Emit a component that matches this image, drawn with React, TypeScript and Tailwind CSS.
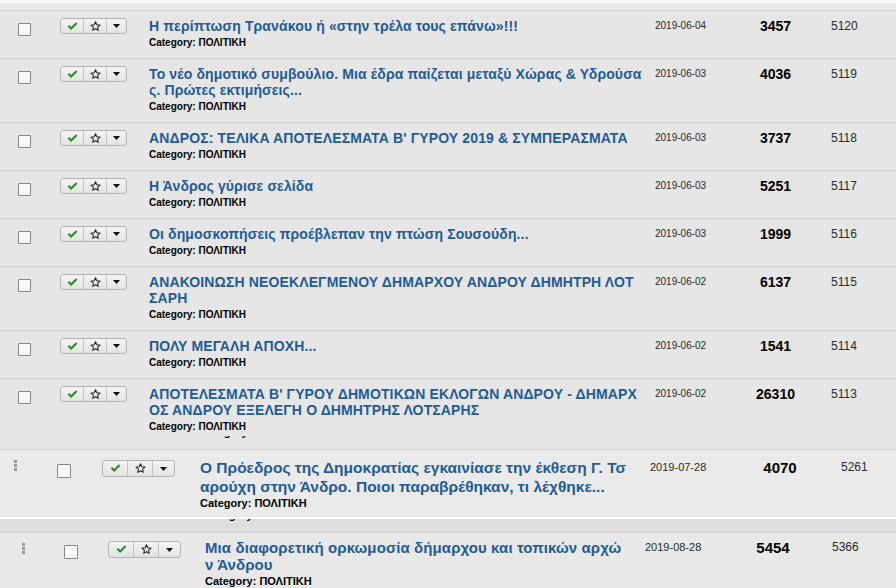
import React from 'react';

interface Article {
  lines: string[];
  date: string;
  hits: string;
  id: string;
}

const topRows: Article[] = [
  { lines: ['Η περίπτωση Τρανάκου ή «στην τρέλα τους επάνω»!!!'], date: '2019-06-04', hits: '3457', id: '5120' },
  {
    lines: ['Το νέο δημοτικό συμβούλιο. Μια έδρα παίζεται μεταξύ Χώρας & Υδρούσα', 'ς. Πρώτες εκτιμήσεις...'],
    date: '2019-06-03',
    hits: '4036',
    id: '5119',
  },
  { lines: ["ΑΝΔΡΟΣ: ΤΕΛΙΚΑ ΑΠΟΤΕΛΕΣΜΑΤΑ Β' ΓΥΡΟΥ 2019 & ΣΥΜΠΕΡΑΣΜΑΤΑ"], date: '2019-06-03', hits: '3737', id: '5118' },
  { lines: ['Η Άνδρος γύρισε σελίδα'], date: '2019-06-03', hits: '5251', id: '5117' },
  { lines: ['Οι δημοσκοπήσεις προέβλεπαν την πτώση Σουσούδη...'], date: '2019-06-03', hits: '1999', id: '5116' },
  {
    lines: ['ΑΝΑΚΟΙΝΩΣΗ ΝΕΟΕΚΛΕΓΜΕΝΟΥ ΔΗΜΑΡΧΟΥ ΑΝΔΡΟΥ ΔΗΜΗΤΡΗ ΛΟΤ', 'ΣΑΡΗ'],
    date: '2019-06-02',
    hits: '6137',
    id: '5115',
  },
  { lines: ['ΠΟΛΥ ΜΕΓΑΛΗ ΑΠΟΧΗ...'], date: '2019-06-02', hits: '1541', id: '5114' },
  {
    lines: ["ΑΠΟΤΕΛΕΣΜΑΤΑ Β' ΓΥΡΟΥ ΔΗΜΟΤΙΚΩΝ ΕΚΛΟΓΩΝ ΑΝΔΡΟΥ - ΔΗΜΑΡΧ", 'ΟΣ ΑΝΔΡΟΥ ΕΞΕΛΕΓΗ Ο ΔΗΜΗΤΡΗΣ ΛΟΤΣΑΡΗΣ'],
    date: '2019-06-02',
    hits: '26310',
    id: '5113',
  },
];

function CheckIcon() {
  return (
    <svg width="11" height="9" viewBox="0 0 11 9">
      <path d="M0.6 4.6 L2.2 3.1 L4.1 5 L8.9 0.3 L10.4 1.8 L4.1 8 Z" fill="#2f8a2a" />
    </svg>
  );
}

function StarIcon() {
  return (
    <svg width="11" height="11" viewBox="0 0 12 12">
      <path
        d="M6 0.9 L7.45 4.1 L10.9 4.45 L8.3 6.75 L9.05 10.2 L6 8.45 L2.95 10.2 L3.7 6.75 L1.1 4.45 L4.55 4.1 Z"
        fill="none"
        stroke="#222"
        strokeWidth="1.1"
        strokeLinejoin="round"
      />
    </svg>
  );
}

function Caret() {
  return (
    <svg width="7" height="4" viewBox="0 0 7 4">
      <path d="M0 0 H7 L3.5 4 Z" fill="#111" />
    </svg>
  );
}

function ButtonGroup({ large }: { large?: boolean }) {
  return (
    <div
      className={`flex rounded-[3px] border border-[#b4b4b4] bg-gradient-to-b from-[#f4f4f4] to-[#e2e2e2] ${
        large ? 'h-[17px] w-[73px]' : 'h-[16px] w-[67px]'
      }`}
    >
      <div className={`flex items-center justify-center border-r border-[#c2c2c2] ${large ? 'w-[25px]' : 'w-[23px]'}`}>
        <CheckIcon />
      </div>
      <div className={`flex items-center justify-center border-r border-[#c2c2c2] ${large ? 'w-[25px]' : 'w-[23px]'}`}>
        <StarIcon />
      </div>
      <div className="flex flex-1 items-center justify-center">
        <Caret />
      </div>
    </div>
  );
}

function Checkbox({ large }: { large?: boolean }) {
  return (
    <div
      className={`rounded-[1px] border border-[#858585] bg-[#f8f8f8] ${large ? 'h-[14px] w-[14px]' : 'h-[13px] w-[13px]'}`}
    />
  );
}

function DragHandle() {
  return (
    <div className="flex w-[3px] flex-col gap-[1px]">
      <div className="h-[3px] w-[3px] bg-[#9a9a9a]" />
      <div className="h-[3px] w-[3px] bg-[#9a9a9a]" />
      <div className="h-[3px] w-[3px] bg-[#9a9a9a]" />
    </div>
  );
}

// only the descenders of a row cut off by the screenshot seam
function Remnant({ left }: { left: string }) {
  return (
    <div className="h-[4px] overflow-hidden">
      <div className={`-mt-[11px] text-[11px] font-bold leading-[14px] text-black ${left}`}>Category: ΠΟΛΙΤΙΚΗ</div>
    </div>
  );
}

function TopRow({ a, last }: { a: Article; last?: boolean }) {
  return (
    <div className="border-t border-[#d0d0d0] bg-[#e6e6e6]">
      <div className={`flex items-start pt-[7px] ${last ? 'pb-0' : 'pb-[9px]'}`}>
        <div className="w-[60px] shrink-0 pl-[18px] pt-[5px]">
          <Checkbox />
        </div>
        <div className="w-[89px] shrink-0">
          <ButtonGroup />
        </div>
        <div className="w-[506px] shrink-0">
          {a.lines.map((l) => (
            <div
              key={l}
              className="whitespace-nowrap text-[14px] font-bold leading-[16px] tracking-[0.13px] text-[#1f5b98]"
            >
              {l}
            </div>
          ))}
          <div className="mt-[2px] text-[10px] font-bold leading-[13px] text-black">Category: ΠΟΛΙΤΙΚΗ</div>
        </div>
        <div className="w-[85px] shrink-0 text-[10px] leading-[16px] text-[#2a2a2a]">{a.date}</div>
        <div className="w-[71px] shrink-0 text-center text-[14px] font-bold leading-[16px] text-black">{a.hits}</div>
        <div className="pl-[20px] text-[12px] leading-[16px] text-[#2a2a2a]">{a.id}</div>
      </div>
      {last && (
        <div className="h-[16px] pt-[3px]">
          <Remnant left="pl-[200px]" />
        </div>
      )}
    </div>
  );
}

export default function App() {
  return (
    <div className="h-[588px] w-[896px] overflow-hidden bg-[#e6e6e6] font-['Liberation_Sans',Arial,sans-serif]">
      <div className="h-[3px] bg-[#f6f6f6]" />
      <div className="h-[7px] bg-[#e8e8e8]" />
      {topRows.map((a, i) => (
        <TopRow key={a.id} a={a} last={i === topRows.length - 1} />
      ))}

      {/* second capture */}
      <div className="flex h-[68px] items-start border-t border-[#d2d2d2] bg-[#eaeaea] pt-[8px]">
        <div className="w-[57px] shrink-0 pl-[14px] pt-[2px]">
          <DragHandle />
        </div>
        <div className="w-[45px] shrink-0 pt-[6px]">
          <Checkbox large />
        </div>
        <div className="w-[98px] shrink-0 pt-[2px]">
          <ButtonGroup large />
        </div>
        <div className="w-[450px] shrink-0">
          <div className="whitespace-nowrap text-[15.5px] font-bold leading-[19px] text-[#1f5b98]">
            Ο Πρόεδρος της Δημοκρατίας εγκαινίασε την έκθεση Γ. Τσ
          </div>
          <div className="whitespace-nowrap text-[15.5px] font-bold leading-[19px] text-[#1f5b98]">
            αρούχη στην Άνδρο. Ποιοι παραβρέθηκαν, τι λέχθηκε...
          </div>
          <div className="text-[11px] font-bold leading-[14px] text-black">Category: ΠΟΛΙΤΙΚΗ</div>
        </div>
        <div className="w-[95px] shrink-0 text-[11px] leading-[19px] text-[#2a2a2a]">2019-07-28</div>
        <div className="w-[70px] shrink-0 text-center text-[15px] font-bold leading-[19px] text-black">4070</div>
        <div className="pl-[26px] text-[12px] leading-[19px] text-[#2a2a2a]">5261</div>
      </div>
      <div className="h-[2px] bg-white" />
      <div className="h-[14px] border-b border-[#d4d4d4] bg-[#dedede]">
        <Remnant left="pl-[205px]" />
      </div>

      {/* third capture */}
      <div className="flex items-start bg-[#e8e8e8] pt-[6px]">
        <div className="w-[64px] shrink-0 pl-[22px] pt-[4px]">
          <DragHandle />
        </div>
        <div className="w-[44px] shrink-0 pt-[6px]">
          <Checkbox large />
        </div>
        <div className="w-[97px] shrink-0 pt-[2px]">
          <ButtonGroup large />
        </div>
        <div className="w-[440px] shrink-0">
          <div className="whitespace-nowrap text-[15px] font-bold leading-[17px] tracking-[0.1px] text-[#1f5b98]">
            Μια διαφορετική ορκωμοσία δήμαρχου και τοπικών αρχώ
          </div>
          <div className="whitespace-nowrap text-[15px] font-bold leading-[17px] tracking-[0.1px] text-[#1f5b98]">
            ν Άνδρου
          </div>
          <div className="text-[11px] font-bold leading-[17px] text-black">Category: ΠΟΛΙΤΙΚΗ</div>
        </div>
        <div className="w-[93px] shrink-0 text-[11px] leading-[17px] text-[#2a2a2a]">2019-08-28</div>
        <div className="w-[70px] shrink-0 text-center text-[15px] font-bold leading-[17px] text-black">5454</div>
        <div className="pl-[24px] text-[12px] leading-[17px] text-[#2a2a2a]">5366</div>
      </div>
    </div>
  );
}
